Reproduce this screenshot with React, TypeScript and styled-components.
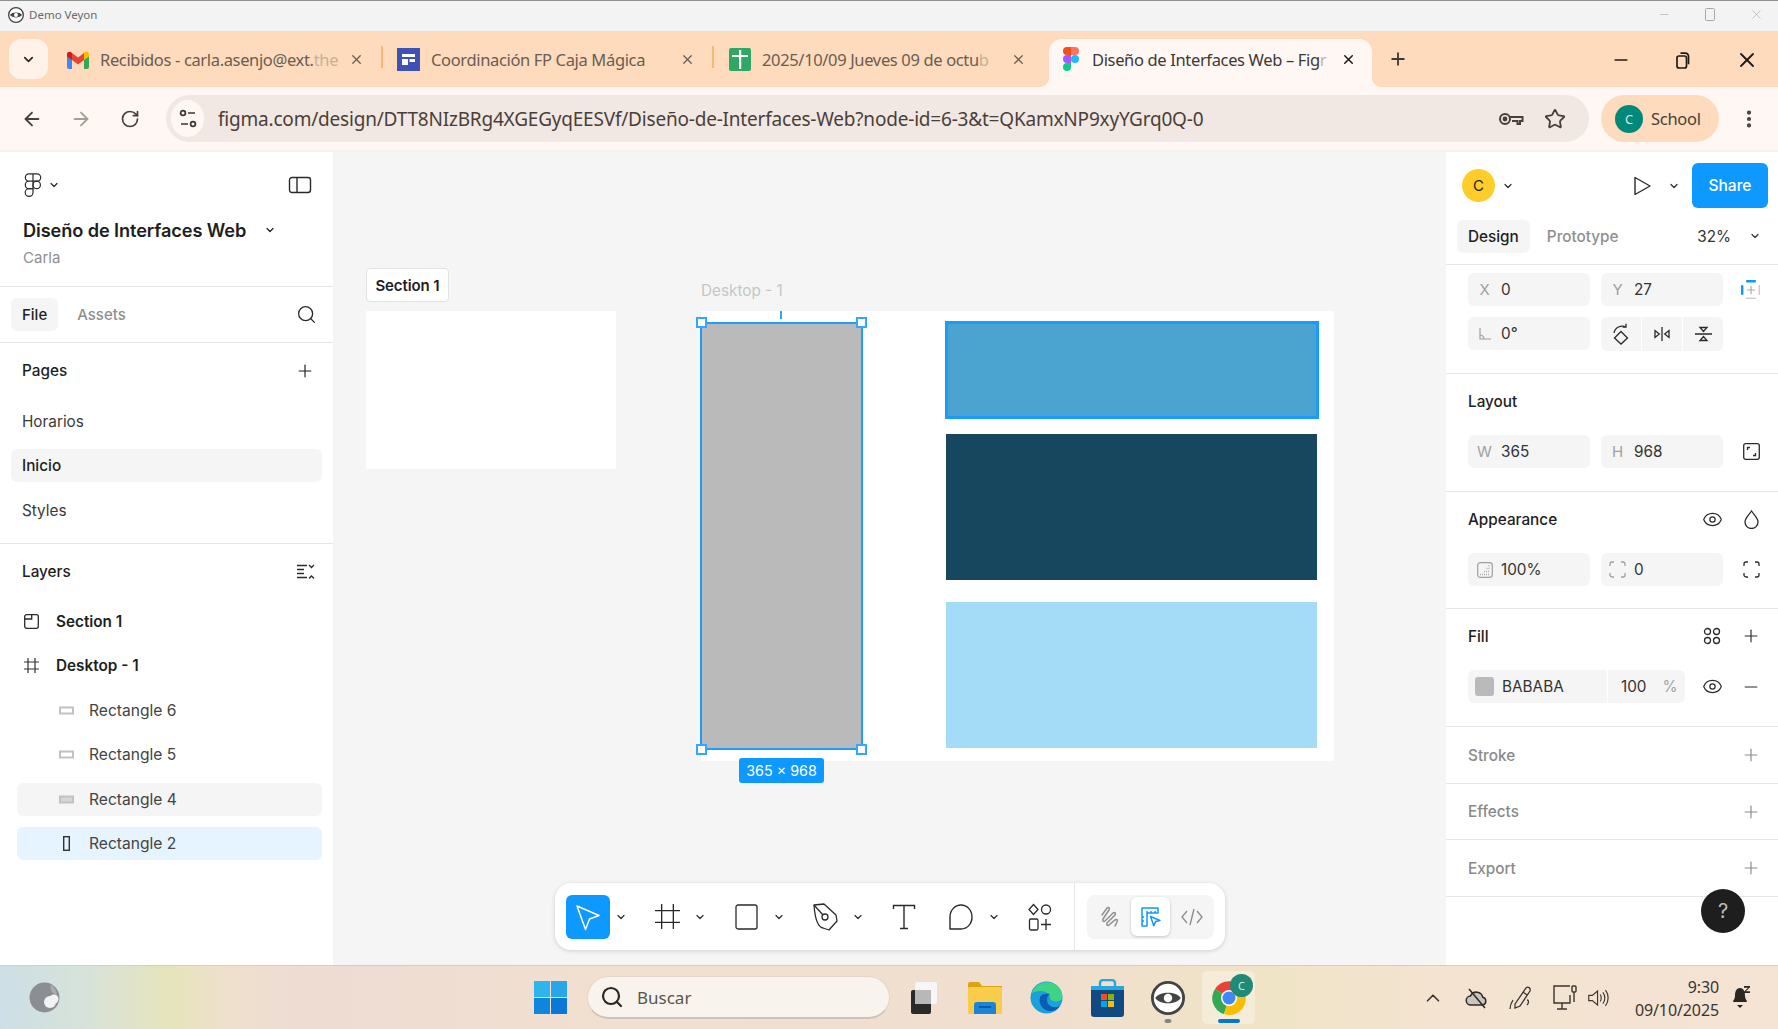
import React from "react";
import styled, { createGlobalStyle } from "styled-components";
import { ArrowLeft, ArrowRight, ChevronDown, ChevronUp, EllipsisVertical, Eye, Minus, Plus, RotateCw, Search, Star, X } from "lucide-react";

const Global = createGlobalStyle`
  html, body { margin: 0; padding: 0; width: 1778px; height: 1029px; overflow: hidden; background: #fff; }
  * { box-sizing: border-box; }
`;
const Page = styled.div`
  width: 1778px; height: 1029px; display: flex; flex-direction: column; overflow: hidden;
  font-family: Inter, "Noto Sans", sans-serif; color: #1e1e1e;
`;

/* ---------- OS title bar ---------- */
const TitleBar = styled.div`
  height: 31px; flex: none; display: flex; align-items: center; padding: 0 14px 3px 8px; gap: 5px;
  background: #f3f3f3; border-top: 1px solid #8d9290;
  font: 11.5px "Noto Sans", sans-serif; color: #6a6a6a;
`;
const WinDim = styled.div`
  margin-left: auto; display: flex; gap: 33px; align-items: center; color: #a8a8a8;
`;

/* ---------- Browser tabs ---------- */
const TabStrip = styled.div`
  height: 56px; flex: none; display: flex; align-items: flex-end; background: #fddbbc; padding-left: 9px;
  font-family: "Noto Sans", sans-serif;
`;
const TabListBtn = styled.div`
  width: 39px; height: 40px; margin-bottom: 8px; margin-right: 4px; border-radius: 12px; background: #fff2e9;
  display: flex; align-items: center; justify-content: center; color: #2a2320; flex: none;
`;
const Tab = styled.div<{ $w: number; $active?: boolean; $pad: number; $pr: number }>`
  width: ${p => p.$w}px; height: 48px; flex: none; display: flex; align-items: center; position: relative;
  padding: 0 ${p => p.$pr}px 7px ${p => p.$pad}px; gap: 11px; font-size: 16.5px; color: ${p => (p.$active ? "#3e3733" : "#6a5d52")};
  ${p => p.$active && `
    background: #fff7f3; border-radius: 13px 13px 0 0; padding-bottom: 8px; gap: 13px; color: #3e3733;
    &::before, &::after { content: ""; position: absolute; bottom: 0; width: 10px; height: 10px; }
    &::before { left: -10px; background: radial-gradient(circle at 0 0, transparent 10px, #fff7f3 10.5px); }
    &::after { right: -10px; background: radial-gradient(circle at 100% 0, transparent 10px, #fff7f3 10.5px); }
  `}
`;
const TabText = styled.span`
  flex: 1; min-width: 0; white-space: nowrap; letter-spacing: -0.35px;
`;
const TabFade = styled.span`
  opacity: 0.35;
`;
const TabSep = styled.div`
  width: 2px; height: 22px; margin-bottom: 19px; background: #f6b777; flex: none;
`;
const NewTab = styled.div`
  width: 24px; margin-left: 14px; margin-bottom: 16px; height: 24px; display: flex; align-items: center; justify-content: center; color: #3e3733; flex: none;
`;
const WinControls = styled.div`
  margin-left: auto; margin-right: 19px; margin-bottom: 15px; display: flex; gap: 45px; align-items: center; color: #1f1a17;
`;

/* ---------- Browser toolbar ---------- */
const BrowserBar = styled.div`
  height: 63px; flex: none; display: flex; align-items: center; background: #fff7f3; padding: 0 0 0 20px;
  font-family: "Noto Sans", sans-serif; color: #4a3f38;
`;
const NavIcon = styled.div<{ $dim?: boolean }>`
  width: 24px; height: 24px; margin-right: 25px; display: flex; align-items: center; justify-content: center; flex: none;
  color: ${p => (p.$dim ? "#a89d95" : "#4a3f38")};
`;
const Omnibox = styled.div`
  width: 1423px; height: 47px; margin-left: -1px; border-radius: 24px; background: #f1e8e3; flex: none;
  display: flex; align-items: center; padding: 0 23px 0 5px; font-size: 19px; letter-spacing: -0.2px;
`;
const SiteBtn = styled.div`
  width: 33px; height: 37px; border-radius: 50%; background: #fff7f3; display: flex; align-items: center; justify-content: center; margin-right: 14px; flex: none;
`;
const UrlText = styled.span`
  flex: 1; white-space: nowrap;
`;
const OmniIcons = styled.div`
  display: flex; gap: 20px; align-items: center; color: #4a3f38;
`;
const ProfilePill = styled.div`
  width: 118px; height: 47px; margin-left: 12px; border-radius: 24px; background: #fddbbc; flex: none;
  display: flex; align-items: center; gap: 8px; padding-left: 14px; font-size: 16.5px; letter-spacing: -0.3px;
`;
const ProfileDot = styled.div`
  width: 28px; height: 28px; border-radius: 50%; background: #00897b; color: #cfeee8; font-size: 13px;
  display: flex; align-items: center; justify-content: center; flex: none;
`;
const MenuBtn = styled.div`
  margin-left: 19px; color: #4a3f38; display: flex;
`;
const ChromeEdge = styled.div`
  height: 2px; flex: none; background: #fbeee5;
`;

/* ---------- Main ---------- */
const Main = styled.div`
  flex: 1; min-height: 0; display: flex; background: #f5f5f5;
`;

const LeftPanel = styled.aside`
  width: 333px; flex: none; background: #fff; display: flex; flex-direction: column;
`;
const LeftHeader = styled.div`
  height: 135px; flex: none; padding: 17px 22px 0 23px; border-bottom: 1px solid #e6e6e6;
`;
const LogoRow = styled.div`
  height: 32px; display: flex; align-items: center; gap: 5px; color: #2a2a2a;
`;
const LogoEnd = styled.div`
  margin-left: auto; margin-right: -1px; display: flex;
`;
const ProjectRow = styled.div`
  margin-top: 16px; height: 26px; display: flex; align-items: center; gap: 0; font-size: 18.2px; font-weight: 600; color: #1e1e1e; letter-spacing: -0.1px;
`;
const ProjectChevron = styled.div`
  margin-left: 18px; display: flex;
`;
const Owner = styled.div`
  margin-top: 4px; height: 22px; line-height: 22px; font-size: 15px; color: #8f8f8f;
`;
const TabsRow = styled.div`
  height: 56px; flex: none; display: flex; align-items: center; padding: 0 16px 0 11px; gap: 8px; border-bottom: 1px solid #e6e6e6;
  font-size: 15px; font-weight: 500;
`;
const PanelTab = styled.div<{ $active?: boolean }>`
  height: 33px; padding: 0 11px; border-radius: 6px; display: flex; align-items: center;
  background: ${p => (p.$active ? "#f5f5f5" : "transparent")}; color: ${p => (p.$active ? "#1e1e1e" : "#8f8f8f")};
`;
const TabEnd = styled.div`
  margin-left: auto; display: flex; color: #2a2a2a;
`;
const PagesBlock = styled.section`
  height: 201px; flex: none; padding: 11px 11px 0; border-bottom: 1px solid #e6e6e6;
`;
const HeadRow = styled.div`
  height: 33px; display: flex; align-items: center; justify-content: space-between; padding: 0 7px 0 11px; font-size: 15.3px; font-weight: 550; color: #1e1e1e;
`;
const RowList = styled.div`
  margin-top: 17.5px; display: grid; grid-auto-rows: 33px; row-gap: 11.5px;
`;
const LayerList = styled(RowList)`
  margin-top: 16.5px;
`;
const PageRow = styled.div<{ $active?: boolean }>`
  display: flex; align-items: center; padding-left: 11px; border-radius: 6px; font-size: 15.3px;
  background: ${p => (p.$active ? "#f5f5f5" : "transparent")}; color: ${p => (p.$active ? "#1e1e1e" : "#3a3a3a")};
  font-weight: ${p => (p.$active ? 500 : 400)};
`;
const LayersBlock = styled.section`
  flex: 1; padding: 11px 11px 0;
`;
const LayerRow = styled.div<{ $indent?: boolean; $bg?: string }>`
  margin-left: 6px; display: flex; align-items: center; border-radius: 6px; background: ${p => p.$bg ?? "transparent"};
  padding-left: ${p => (p.$indent ? 41 : 6)}px; gap: ${p => (p.$indent ? 14 : 16)}px;
  font-size: ${p => (p.$indent ? 15.6 : 15.3)}px; font-weight: ${p => (p.$indent ? 400 : 600)}; color: ${p => (p.$indent ? "#444" : "#1e1e1e")};
`;
const LayerIcon = styled.div`
  width: 17px; display: flex; align-items: center; justify-content: center; flex: none; color: #333;
`;

/* ---------- Canvas ---------- */
const Canvas = styled.main`
  flex: 1; min-width: 0; position: relative; overflow: hidden; background: #f5f5f5;
`;
const Box = styled.div<{ $x: number; $y: number; $w: number; $h: number; $bg?: string }>`
  position: absolute; left: ${p => p.$x - 333}px; top: ${p => p.$y - 152}px; width: ${p => p.$w}px; height: ${p => p.$h}px;
  background: ${p => p.$bg ?? "transparent"};
`;
const SectionTag = styled(Box)`
  background: #fff; border: 1px solid #e2e2e2; border-radius: 4px; font-size: 15px; font-weight: 600;
  display: flex; align-items: center; justify-content: center; color: #1e1e1e; letter-spacing: -0.1px;
`;
const FrameLabel = styled(Box)`
  font-size: 15.3px; color: #c6c6c6; font-weight: 400; line-height: 22px;
`;
const Selected = styled(Box)`
  border: 2px solid #1e9dff;
`;
const Hovered = styled(Box)`
  border: 3px solid #1a9bff;
`;
const Handle = styled(Box)`
  background: #fff; border: 2px solid #35a6ff; width: 11px; height: 11px; margin: -5px 0 0 -5px;
`;
const Tick = styled(Box)`
  border-left: 2px dashed #2ea3ff;
`;
const SizeTag = styled(Box)`
  background: #0d99ff; color: #fff; border-radius: 3px; font-size: 14.3px; font-weight: 400;
  display: flex; align-items: center; justify-content: center;
`;
const FloatBar = styled.div`
  position: absolute; left: ${555 - 333}px; top: ${883 - 152}px; width: 670px; height: 67px; border-radius: 16px; background: #fff;
  box-shadow: 0 1px 4px rgba(0,0,0,.16); display: flex; align-items: center; padding-left: 11px;
`;
const ToolSet = styled.div`
  display: flex; align-items: center; gap: 13px;
`;
const ToolPair = styled.div`
  display: flex; align-items: center;
`;
const Tool = styled.div<{ $active?: boolean }>`
  width: 44px; height: 44px; border-radius: 6px; display: flex; align-items: center; justify-content: center;
  background: ${p => (p.$active ? "#0d99ff" : "transparent")}; color: ${p => (p.$active ? "#fff" : "#2a2a2a")};
`;
const ToolChevron = styled.div`
  width: 22px; display: flex; align-items: center; justify-content: center; color: #2a2a2a;
`;
const BarDivider = styled.div`
  width: 1px; height: 100%; margin-left: 12px; background: #e6e6e6; flex: none;
`;
const ModeGroup = styled.div`
  margin-left: 12px; width: 127px; height: 44px; border-radius: 8px; background: #f5f5f5; display: flex; align-items: center; justify-content: space-between; padding: 0 3px 0 3px;
`;
const ModeBtn = styled.div<{ $active?: boolean }>`
  width: 39px; height: 39px; border-radius: 6px; display: flex; align-items: center; justify-content: center;
  background: ${p => (p.$active ? "#fff" : "transparent")}; box-shadow: ${p => (p.$active ? "0 1px 3px rgba(0,0,0,.2)" : "none")};
  color: ${p => (p.$active ? "#0d99ff" : "#8f8f8f")};
`;

/* ---------- Right panel ---------- */
const RightPanel = styled.aside`
  width: 332px; flex: none; background: #fff; display: flex; flex-direction: column; position: relative;
`;
const RightHead = styled.div`
  height: 113px; flex: none; padding: 11px 10px 0 11px; border-bottom: 1px solid #e6e6e6;
`;
const RightTop = styled.div`
  height: 45px; display: flex; align-items: center; padding-left: 5px;
`;
const Avatar = styled.div`
  width: 33px; height: 33px; border-radius: 50%; background: #ffcd29; font-size: 15px; font-weight: 400; color: #222;
  display: flex; align-items: center; justify-content: center; flex: none;
`;
const SmallChevron = styled.div<{ $ml?: number }>`
  display: flex; margin-left: ${p => p.$ml ?? 0}px; color: #2a2a2a;
`;
const PlayBtn = styled.div`
  margin-left: auto; display: flex; color: #2a2a2a;
`;
const ShareBtn = styled.div`
  width: 76px; height: 45px; margin-left: 12px; border-radius: 6px; background: #0d99ff; color: #fff; font-size: 15.5px; font-weight: 500;
  display: flex; align-items: center; justify-content: center;
`;
const RightTabs = styled.div`
  margin-top: 11px; height: 34px; display: flex; align-items: center; gap: 6px; font-size: 15.3px; font-weight: 500;
`;
const Zoom = styled.div`
  margin-left: auto; display: flex; align-items: center; gap: 18px; font-size: 15.3px; font-weight: 400; color: #333; padding-right: 7px;
`;
const Block = styled.section<{ $pt?: number; $pb?: number }>`
  padding: ${p => p.$pt ?? 14}px 10px ${p => p.$pb ?? 22}px 22px; border-bottom: 1px solid #e6e6e6; flex: none;
`;
const BlockTitle = styled.div<{ $muted?: boolean }>`
  height: 26px; display: flex; align-items: center; font-size: 15.3px; font-weight: ${p => (p.$muted ? 500 : 550)};
  color: ${p => (p.$muted ? "#8a8a8a" : "#1e1e1e")};
`;
const TitleIcons = styled.div`
  margin-left: auto; display: flex; align-items: center; color: #2a2a2a;
`;
const IconCell = styled.div<{ $muted?: boolean; $flush?: boolean }>`
  width: 34px; height: 33px; display: flex; align-items: center; justify-content: center; flex: none; margin-left: ${p => (p.$flush ? 0 : 5)}px;
  color: ${p => (p.$muted ? "#8a8a8a" : "#2a2a2a")};
`;
const FieldGrid = styled.div<{ $mt?: number }>`
  display: grid; grid-template-columns: 122px 122px 34px; column-gap: 11px; row-gap: 11px; margin-top: ${p => p.$mt ?? 0}px;
`;
const Field = styled.div`
  height: 33px; border-radius: 6px; background: #f5f5f5; display: flex; align-items: center; font-size: 15.3px; color: #333;
`;
const FieldLabel = styled.div`
  width: 33px; flex: none; display: flex; align-items: center; justify-content: center; color: #a0a0a0; font-size: 15px;
`;
const Segments = styled.div`
  height: 34px; display: grid; grid-template-columns: 1fr 1fr 1fr; column-gap: 1px;
`;
const Segment = styled.div`
  background: #f5f5f5; display: flex; align-items: center; justify-content: center; color: #2a2a2a;
  &:first-child { border-radius: 6px 0 0 6px; } &:last-child { border-radius: 0 6px 6px 0; }
`;
const FillRow = styled.div`
  margin-top: 21px; display: flex; align-items: center;
`;
const FillField = styled(Field)`
  width: 217px; flex: none; margin-right: 5px;
`;
const Swatch = styled.div`
  width: 19px; height: 19px; margin: 0 8px 0 7px; border-radius: 3px; background: #bababa; flex: none;
`;
const HexText = styled.div`
  width: 106px; height: 100%; display: flex; align-items: center; border-right: 1px solid #fff; flex: none;
`;
const Opacity = styled.div`
  display: flex; align-items: center; padding-left: 13px; gap: 16px;
`;
const Pct = styled.span`
  color: #a0a0a0;
`;
const HelpBtn = styled.div`
  position: absolute; left: 255px; top: 737px; width: 44px; height: 44px; border-radius: 50%; background: #1e1e1e; color: #bbb;
  display: flex; align-items: center; justify-content: center; font-size: 20px;
`;
const EmptyBlock = styled.section<{ $h: number }>`
  height: ${p => p.$h}px; padding: 0 10px 0 22px; display: flex; align-items: center; border-bottom: 1px solid #e6e6e6; flex: none;
`;

/* ---------- Taskbar ---------- */
const Taskbar = styled.footer`
  height: 64px; flex: none; display: flex; align-items: center; position: relative;
  border-top: 1px solid #d8cdc5;
  background: linear-gradient(90deg, #cddfe6 0, #d8e3d8 90px, #e6e4bb 170px, #efe0cd 230px, #eedcd4 300px, #f1dfcf 620px, #f0dfcf 1050px, #f0e4c6 1270px, #f3e3d0 1420px, #f5e3d4 100%);
  font-family: "Noto Sans", sans-serif; color: #3a3430;
`;
const WidgetSlot = styled.div`
  width: 534px; padding-left: 29px; flex: none; display: flex; align-items: center;
`;
const SearchBox = styled.div`
  width: 303px; height: 43px; margin-left: 20px; flex: none; border-radius: 22px; background: #f9f3ed; border: 1px solid #e2d6cc; border-bottom: 2px solid #cfc3b9;
  display: flex; align-items: center; padding-left: 12px; gap: 13px; font-size: 17px; color: #5c544e;
`;
const AppSlot = styled.div<{ $ml: number; $w: number; $active?: boolean }>`
  margin-left: ${p => p.$ml}px; width: ${p => p.$w}px; height: 53px; flex: none; display: flex; align-items: center; justify-content: center; position: relative; border-radius: 5px;
  background: ${p => (p.$active ? "rgba(255,255,255,.32)" : "transparent")};
`;
const RunDot = styled.div<{ $blue?: boolean }>`
  position: absolute; bottom: 1px; left: 50%; transform: translateX(-50%); height: 4px; border-radius: 2px;
  width: ${p => (p.$blue ? 22 : 7)}px; background: ${p => (p.$blue ? "#0078d4" : "#8a8580")};
`;
const ChromeBadge = styled.div`
  position: absolute; top: 3px; right: 2px; width: 23px; height: 23px; border-radius: 50%; background: #1f8a76; color: #cfeee8; font-size: 11px;
  display: flex; align-items: center; justify-content: center;
`;
const Tray = styled.div`
  position: absolute; inset: 0 13px 0 auto; display: flex; align-items: center; color: #3a3430;
`;
const TrayIcon = styled.div<{ $w: number }>`
  width: ${p => p.$w}px; flex: none; display: flex; align-items: center; justify-content: center;
`;
const Clock = styled.div`
  width: 110px; margin-top: 3px; text-align: right; font-size: 16px; line-height: 23px; letter-spacing: -0.1px; color: #3a3430; flex: none;
`;

/* ---------- Drawings ---------- */
const VeyonEye = ({ s = 16 }: { s?: number }) => (
  <svg width={s} height={s} viewBox="0 0 24 24"><circle cx="12" cy="12" r="11" fill="#fff" stroke="#444" strokeWidth="2" /><path d="M3 12c3-5 15-5 18 0-3 5-15 5-18 0z" fill="#444" /><circle cx="12" cy="12" r="3" fill="#fff" /></svg>
);
const Gmail = () => (
  <svg width="22" height="18" viewBox="0 0 22 18"><path d="M0 4v12a2 2 0 0 0 2 2h3V8z" fill="#4285f4" /><path d="M22 4v12a2 2 0 0 1-2 2h-3V8z" fill="#34a853" /><path d="M17 1.5V9l5-3.6V3c0-2.4-3-3.4-5-1.5z" fill="#fbbc04" /><path d="M5 9V2l6 4.6L17 2v7l-6 4.5z" fill="#ea4335" /><path d="M0 3v2.4L5 9V2C3-.2 0 .7 0 3z" fill="#c5221f" /></svg>
);
const DocsIcon = () => (
  <svg width="23" height="23" viewBox="0 0 23 23"><rect width="23" height="23" fill="#3f51b5" /><rect x="5" y="6" width="13" height="3" fill="#fff" /><rect x="5" y="11" width="6" height="6" fill="#fff" /><rect x="12.5" y="11" width="5.5" height="3" fill="#fff" /></svg>
);
const SheetsIcon = () => (
  <svg width="22" height="23" viewBox="0 0 22 23"><rect width="22" height="23" rx="2" fill="#2fa866" /><rect x="3" y="7" width="16" height="2" fill="#fff" /><rect x="10" y="2" width="2.2" height="19" fill="#fff" /></svg>
);
const FigmaColor = () => (
  <svg width="16" height="24" viewBox="0 0 16 24"><path d="M4 0h4v8H4a4 4 0 0 1 0-8z" fill="#f24e1e" /><path d="M8 0h4a4 4 0 0 1 0 8H8z" fill="#ff7262" /><path d="M4 8h4v8H4a4 4 0 0 1 0-8z" fill="#a259ff" /><circle cx="12" cy="12" r="4" fill="#1abcfe" /><path d="M4 16h4v4a4 4 0 1 1-4-4z" fill="#0acf83" /></svg>
);
const FigmaLine = () => (
  <svg width="20" height="24" viewBox="0 0 16 24" fill="none" stroke="currentColor" strokeWidth="1.2"><path d="M4 .8h4v7.4H4a3.7 3.7 0 0 1 0-7.4zM8 .8h4a3.7 3.7 0 0 1 0 7.4H8zM4 8.2h4v7.4H4a3.7 3.7 0 0 1 0-7.4z" /><circle cx="11.7" cy="11.9" r="3.7" /><path d="M4 15.6h4v3.9a3.9 3.9 0 1 1-4-3.9z" /></svg>
);
const Tiny = ({ s = 12 }: { s?: number }) => <ChevronDown size={s} strokeWidth={2.4} />;
const SidebarIcon = () => (
  <svg width="24" height="18" viewBox="0 0 24 18" fill="none" stroke="#2a2a2a" strokeWidth="1.4"><rect x="1.5" y="1.5" width="21" height="15" rx="2.5" /><path d="M9 1.5v15" /></svg>
);
const CollapseIcon = () => (
  <svg width="18" height="16" viewBox="0 0 18 16" fill="none" stroke="#2a2a2a" strokeWidth="1.3"><path d="M0 1.5h10M0 5.5h7M0 9.5h7M0 13.5h10" /><path d="M12 1l2.5 2.5L17 1M12 14.5L14.5 12l2.5 2.5" /></svg>
);
const SectionIcon = () => (
  <svg width="15" height="15" viewBox="0 0 15 15" fill="none" stroke="#2a2a2a" strokeWidth="1.3"><rect x=".7" y=".7" width="13.6" height="13.6" rx="2" /><path d="M.7 5h7V.7" /></svg>
);
const FrameIcon = ({ s = 15, w = 1.2 }: { s?: number; w?: number }) => (
  <svg width={s} height={s} viewBox="0 0 15 15" fill="none" stroke="currentColor" strokeWidth={w}><path d="M4 0v15M11 0v15M0 4h15M0 11h15" /></svg>
);
const RectH = () => (
  <svg width="15" height="9" viewBox="0 0 15 9"><rect x="1" y="1.5" width="13" height="6" fill="#fff" stroke="#c2c2c2" strokeWidth="2" /></svg>
);
const RectHFill = () => (
  <svg width="15" height="9" viewBox="0 0 15 9"><rect x="1" y="1.5" width="13" height="6" fill="#d6d6d6" stroke="#c2c2c2" strokeWidth="2" /></svg>
);
const RectV = () => (
  <svg width="9" height="15" viewBox="0 0 9 15"><rect x="1.7" y=".7" width="5.6" height="13.6" fill="none" stroke="#333" strokeWidth="1.4" /></svg>
);
const PlayLine = () => (
  <svg width="20" height="22" viewBox="0 0 20 22" fill="none" stroke="#2a2a2a" strokeWidth="1.4" strokeLinejoin="round"><path d="M3 2.5 18 11 3 19.5z" /></svg>
);
const AddLayout = () => (
  <svg width="22" height="22" viewBox="0 0 22 22"><rect x="6" y="1" width="10" height="2.4" rx="1" fill="#0d99ff" /><rect x="1" y="6" width="2.4" height="10" rx="1" fill="#0d99ff" /><rect x="18.6" y="6" width="1.4" height="10" fill="#ccc" /><rect x="6" y="18.6" width="10" height="1.4" fill="#ccc" /><path d="M11 7v8M7 11h8" stroke="#aaa" strokeWidth="1.2" /></svg>
);
const AngleIcon = () => (
  <svg width="14" height="14" viewBox="0 0 14 14" fill="none" stroke="#a0a0a0" strokeWidth="1.2"><path d="M2 1v11h11M2 8a4 4 0 0 1 4 4" /></svg>
);
const RotateIcon = () => (
  <svg width="18" height="22" viewBox="0 0 18 22" fill="none" stroke="#2a2a2a" strokeWidth="1.3"><path d="M9 8.5l6.5 6.5L9 21l-6.5-6L9 8.5z" /><path d="M2 10C3 4 9 2 14 4M14 .8V4.2h-3.4" /></svg>
);
const FlipH = () => (
  <svg width="16" height="14" viewBox="0 0 16 14" fill="none" stroke="#2a2a2a" strokeWidth="1.3"><path d="M8 0v14M5.3 7 1 3.5v7zM10.7 7 15 3.5v7z" /></svg>
);
const FlipV = () => (
  <svg width="17" height="16" viewBox="0 0 17 16" fill="none" stroke="#2a2a2a" strokeWidth="1.3"><path d="M0 8h17M8.5 5.5 5 1.5h7zM8.5 10.5 5 14.5h7z" /></svg>
);
const ResizeIcon = () => (
  <svg width="17" height="17" viewBox="0 0 17 17" fill="none" stroke="#2a2a2a" strokeWidth="1.3"><rect x=".7" y=".7" width="15.6" height="15.6" rx="2" /><path d="M4.5 7V4.5H7M12.5 10v2.5H10" /></svg>
);
const Drop = () => (
  <svg width="15" height="19" viewBox="0 0 15 19" fill="none" stroke="#2a2a2a" strokeWidth="1.3"><path d="M7.5 1C5 5 1 8 1 12a6.5 6.5 0 0 0 13 0C14 8 10 5 7.5 1z" /></svg>
);
const OpacityIcon = () => (
  <svg width="16" height="16" viewBox="0 0 16 16" fill="none"><rect x=".7" y=".7" width="14.6" height="14.6" rx="2.5" stroke="#a0a0a0" strokeWidth="1.2" /><path d="M3 12.5h10M7 9.5h6M9.5 6.5h3.5M11.5 3.7h1.5" stroke="#aaa" strokeWidth="1.6" strokeDasharray="1 1" /></svg>
);
const CornersIcon = ({ c = "#2a2a2a" }: { c?: string }) => (
  <svg width="17" height="17" viewBox="0 0 17 17" fill="none" stroke={c} strokeWidth="1.3"><path d="M1 5V3a2 2 0 0 1 2-2h2M12 1h2a2 2 0 0 1 2 2v2M16 12v2a2 2 0 0 1-2 2h-2M5 16H3a2 2 0 0 1-2-2v-2" /></svg>
);
const StylesIcon = () => (
  <svg width="18" height="18" viewBox="0 0 18 18" fill="none" stroke="#2a2a2a" strokeWidth="1.3"><circle cx="4.5" cy="4.5" r="3" /><circle cx="13.5" cy="4.5" r="3" /><circle cx="4.5" cy="13.5" r="3" /><circle cx="13.5" cy="13.5" r="3" /></svg>
);
const CursorIcon = () => (
  <svg width="28" height="30" viewBox="0 0 28 30" fill="none" stroke="#fff" strokeWidth="1.5" strokeLinejoin="round"><path d="M3 4l22 9.5-9.5 3.5-4 10.5z" /></svg>
);
const RectTool = () => (
  <svg width="23" height="26" viewBox="0 0 23 26" fill="none" stroke="currentColor" strokeWidth="1.3"><rect x="1" y="1" width="21" height="24" rx="2" /></svg>
);
const PenTool = () => (
  <svg width="27" height="30" viewBox="0 0 27 30" fill="none" stroke="currentColor" strokeWidth="1.3" strokeLinejoin="round"><path d="M2 3l10-1 12 11 1 6-8 9-6-2C6 25 3 17 2 3z" /><path d="M2 3l9 10" /><circle cx="13" cy="15" r="3" /></svg>
);
const TextTool = () => (
  <svg width="24" height="26" viewBox="0 0 24 26" fill="none" stroke="currentColor" strokeWidth="1.4"><path d="M1.5 5V1.5h21V5M12 1.5V24.5M8 24.5h8" /></svg>
);
const BubbleTool = () => (
  <svg width="24" height="26" viewBox="0 0 24 26" fill="none" stroke="currentColor" strokeWidth="1.4"><path d="M1 25V13C1 6 6 1 12 1s11 5 11 12-5 12-11 12z" strokeLinejoin="round" /></svg>
);
const ActionsTool = () => (
  <svg width="24" height="28" viewBox="0 0 24 28" fill="none" stroke="currentColor" strokeWidth="1.3"><path d="M5.5 1.5 10 6.5l-4.5 5-4.5-5z" /><circle cx="18" cy="6.5" r="4.5" /><rect x="1.5" y="16" width="8.5" height="11" rx="1.5" /><path d="M18 16v11M13 21.5h10" /></svg>
);
const DrawMode = () => (
  <svg width="20" height="22" viewBox="0 0 20 22" fill="none" stroke="currentColor" strokeWidth="1.5"><path d="M2 9l5-7c2-1 3 0 2 2L3 13c-1 2 1 3 2 2l8-8c2-1 3 0 2 2l-8 8c-1 2 1 3 2 2l6-5c2-1 3 0 2 2l-2 4" strokeLinecap="round" /></svg>
);
const DevMode = () => (
  <svg width="20" height="20" viewBox="0 0 20 20" fill="none" stroke="currentColor" strokeWidth="1.5" strokeLinejoin="round"><path d="M1 1h16v5H6v13H1zM6 6V4M10 6V4M14 6V4M1 10h2M1 14h2" /><path d="M9.5 9.5l9.5 4-4.4 1.1-1.8 4.2z" /></svg>
);
const CodeMode = () => (
  <svg width="22" height="18" viewBox="0 0 22 18" fill="none" stroke="currentColor" strokeWidth="1.4"><path d="M6 3 1 9l5 6M16 3l5 6-5 6M13 1 9 17" /></svg>
);
const SiteIcon = () => (
  <svg width="18" height="22" viewBox="0 0 18 22" fill="none" stroke="#3f3630" strokeWidth="1.7"><circle cx="4" cy="5" r="2.4" /><path d="M9 5h7M2 16h7" /><circle cx="14" cy="16" r="2.4" /></svg>
);
const KeyIcon = () => (
  <svg width="26" height="18" viewBox="0 0 26 18" fill="none" stroke="#4a3f38" strokeWidth="2"><circle cx="7" cy="9" r="5" /><circle cx="7" cy="9" r="1.4" fill="#4a3f38" /><path d="M12 7h12.5v4H22v3h-2.5v-3H14" /></svg>
);
const Restore = () => (
  <svg width="14" height="17" viewBox="0 0 14 17" fill="none" stroke="#1f1a17" strokeWidth="1.7"><rect x="1" y="4" width="9.5" height="12" rx="2" /><path d="M4.5 1.2h5a3 3 0 0 1 3 3v8" /></svg>
);
const Moon = () => (
  <svg width="31" height="31" viewBox="0 0 31 31"><circle cx="15.5" cy="15.5" r="15" fill="#8b8e92" /><path d="M22 2.5a15 15 0 0 1 6 10c-4 0-8-5-6-10z" fill="#a9adb0" /><circle cx="21" cy="20" r="6" fill="#f2f3f3" /><circle cx="25" cy="17" r="4.5" fill="#f2f3f3" /></svg>
);
const WinLogo = () => (
  <svg width="33" height="33" viewBox="0 0 33 33"><rect width="16" height="16" fill="#2fb4f0" /><rect x="17" width="16" height="16" fill="#29a5ec" /><rect y="17" width="16" height="16" fill="#0f86dc" /><rect x="17" y="17" width="16" height="16" fill="#0a78d6" /></svg>
);
const TaskView = () => (
  <svg width="34" height="34" viewBox="0 0 34 34"><rect x="10" y="1" width="22" height="22" rx="2" fill="#f6f6f6" /><rect x="6" y="9" width="20" height="24" rx="2" fill="#2a2a2a" /><rect x="10" y="9" width="16" height="14" fill="#b8b8b8" /></svg>
);
const Folder = () => (
  <svg width="36" height="34" viewBox="0 0 36 34"><path d="M1 3a2 2 0 0 1 2-2h9l3 4h19a1 1 0 0 1 1 1v3H1z" fill="#d9a514" /><rect x="1" y="6" width="34" height="27" rx="1.5" fill="#f9cc4a" /><path d="M7 33V24a3 3 0 0 1 3-3h16a3 3 0 0 1 3 3v9z" fill="#1984d8" /><rect x="12" y="25" width="12" height="2" fill="#0b5aa5" /></svg>
);
const Edge = () => (
  <svg width="33" height="33" viewBox="0 0 33 33"><circle cx="16.5" cy="16.5" r="16" fill="#1aa0dc" /><path d="M2 12C5 2 17-2 26 4c6 4 8 12 5 15-4 3-11 1-11-2 1-5-8-10-18-5z" fill="#3dd486" /><path d="M10 16c-2 8 4 15 12 14 3-.5 6-2 8-5-6 3-13 0-13-6 0-3 1-5 3-6-4-1-9 0-10 3z" fill="#0b5cb3" /></svg>
);
const Store = () => (
  <svg width="33" height="38" viewBox="0 0 33 38"><path d="M9 9V4a3 3 0 0 1 3-3h9a3 3 0 0 1 3 3v5" fill="none" stroke="#27a6df" strokeWidth="2.4" /><rect y="7" width="33" height="31" rx="3" fill="#0f4a83" /><rect y="7" width="33" height="4" fill="#27a6df" /><rect x="10" y="15" width="6" height="6" fill="#f25022" /><rect x="17" y="15" width="6" height="6" fill="#7fba00" /><rect x="10" y="22" width="6" height="6" fill="#00a4ef" /><rect x="17" y="22" width="6" height="6" fill="#ffb900" /></svg>
);
const Chrome = () => (
  <svg width="36" height="36" viewBox="0 0 36 36"><path d="M18 18 4 9a16.5 16.5 0 0 1 28 0z" fill="#e94235" /><path d="M18 18 4 9a16.5 16.5 0 0 0 9 25z" fill="#34a853" /><path d="M18 18 32 9a16.5 16.5 0 0 1-19 25z" fill="#fbbc04" /><circle cx="18" cy="18" r="8" fill="#fff" /><circle cx="18" cy="18" r="6.5" fill="#4285f4" /></svg>
);
const CloudOff = () => (
  <svg width="24" height="24" viewBox="0 0 24 24" fill="none" stroke="#2f2a26" strokeWidth="1.5"><path d="M6 19a4.5 4.5 0 0 1-.5-9 6.5 6.5 0 0 1 12.3 1.3A4 4 0 0 1 18 19z" fill="#c9c4be" /><path d="M4 3l16 19" /></svg>
);
const PenTray = () => (
  <svg width="26" height="26" viewBox="0 0 26 26" fill="none" stroke="#3a3430" strokeWidth="1.3"><path d="M7 19 18 3c2-2 5 0 4 3L12 21l-5 2zM15 7l4 3" /><path d="M2 24c0-3 1-6 3-9M19 15c2 0 2 3 0 5" /></svg>
);
const MonitorTray = () => (
  <svg width="26" height="28" viewBox="0 0 26 28" fill="none" stroke="#3a3430" strokeWidth="1.4"><path d="M18 2H2v17h16v-8M10 19v6M5 25h10" /><rect x="20" y="2" width="4" height="6" rx="1" /><path d="M22 8v10" /></svg>
);
const Speaker = () => (
  <svg width="25" height="24" viewBox="0 0 25 24" fill="none" stroke="#3a3430" strokeWidth="1.3"><path d="M2 9v6h4l6 5V4L6 9z" /><path d="M15 8c1.5 2 1.5 6 0 8M18 5.5c3 3.5 3 9.5 0 13M21 3c4 5 4 13 0 18" /></svg>
);
const BellZ = () => (
  <svg width="20" height="26" viewBox="0 0 20 26" fill="#2a2622"><path d="M8 3C4 3 3 7 3 11c0 3-2 4-2 6h14c0-2-2-3-2-6 0-4-1-8-5-8z" /><path d="M5 20h6l-3 3z" /><path d="M12 1h6v1.2l-4 4h4V8h-6V6.8l4-4h-4z" /></svg>
);

const Handles = () => (
  <>
    <Handle $x={701} $y={322} $w={11} $h={11} />
    <Handle $x={861} $y={322} $w={11} $h={11} />
    <Handle $x={701} $y={749} $w={11} $h={11} />
    <Handle $x={861} $y={749} $w={11} $h={11} />
  </>
);

export default function App() {
  return (
    <Page>
      <Global />
      <TitleBar>
        <VeyonEye />
        <span>Demo Veyon</span>
        <WinDim>
          <Minus size={13} strokeWidth={1.2} />
          <svg width="12" height="13" viewBox="0 0 12 13" fill="none" stroke="currentColor"><rect x="1.5" y=".5" width="9" height="12" rx="1" /></svg>
          <X size={15} strokeWidth={1} />
        </WinDim>
      </TitleBar>

      <TabStrip>
        <TabListBtn><ChevronDown size={15} strokeWidth={2.6} /></TabListBtn>
        <Tab $w={329} $pad={15} $pr={17}><Gmail /><TabText>Recibidos - carla.asenjo@ext.<TabFade>the</TabFade></TabText><X size={15} strokeWidth={2} /></Tab>
        <TabSep />
        <Tab $w={329} $pad={14} $pr={17}><DocsIcon /><TabText>Coordinación FP Caja Mágica</TabText><X size={15} strokeWidth={2} /></Tab>
        <TabSep />
        <Tab $w={335} $pad={15} $pr={23}><SheetsIcon /><TabText>2025/10/09 Jueves 09 de octu<TabFade>b</TabFade></TabText><X size={15} strokeWidth={2} /></Tab>
        <Tab $w={323} $pad={14} $pr={16} $active><FigmaColor /><TabText>Diseño de Interfaces Web – Fig<TabFade>r</TabFade></TabText><X size={15} strokeWidth={2.4} color="#1f1a17" /></Tab>
        <NewTab><Plus size={20} strokeWidth={2.2} /></NewTab>
        <WinControls>
          <Minus size={20} strokeWidth={2} />
          <Restore />
          <X size={24} strokeWidth={1.8} />
        </WinControls>
      </TabStrip>

      <BrowserBar>
        <NavIcon><ArrowLeft size={22} strokeWidth={2} /></NavIcon>
        <NavIcon $dim><ArrowRight size={22} strokeWidth={2} /></NavIcon>
        <NavIcon><RotateCw size={20} strokeWidth={2} /></NavIcon>
        <Omnibox>
          <SiteBtn><SiteIcon /></SiteBtn>
          <UrlText>figma.com/design/DTT8NIzBRg4XGEGyqEESVf/Diseño-de-Interfaces-Web?node-id=6-3&amp;t=QKamxNP9xyYGrq0Q-0</UrlText>
          <OmniIcons><KeyIcon /><Star size={22} strokeWidth={2} /></OmniIcons>
        </Omnibox>
        <ProfilePill><ProfileDot>C</ProfileDot>School</ProfilePill>
        <MenuBtn><EllipsisVertical size={22} strokeWidth={2.6} /></MenuBtn>
      </BrowserBar>
      <ChromeEdge />

      <Main>
        <LeftPanel>
          <LeftHeader>
            <LogoRow>
              <FigmaLine /><Tiny />
              <LogoEnd><SidebarIcon /></LogoEnd>
            </LogoRow>
            <ProjectRow>Diseño de Interfaces Web<ProjectChevron><Tiny /></ProjectChevron></ProjectRow>
            <Owner>Carla</Owner>
          </LeftHeader>
          <TabsRow>
            <PanelTab $active>File</PanelTab>
            <PanelTab>Assets</PanelTab>
            <TabEnd><Search size={21} strokeWidth={1.5} /></TabEnd>
          </TabsRow>
          <PagesBlock>
            <HeadRow>Pages<Plus size={20} strokeWidth={1.4} /></HeadRow>
            <RowList>
              <PageRow>Horarios</PageRow>
              <PageRow $active>Inicio</PageRow>
              <PageRow>Styles</PageRow>
            </RowList>
          </PagesBlock>
          <LayersBlock>
            <HeadRow>Layers<CollapseIcon /></HeadRow>
            <LayerList>
              <LayerRow><LayerIcon><SectionIcon /></LayerIcon>Section 1</LayerRow>
              <LayerRow><LayerIcon><FrameIcon /></LayerIcon>Desktop - 1</LayerRow>
              <LayerRow $indent><LayerIcon><RectH /></LayerIcon>Rectangle 6</LayerRow>
              <LayerRow $indent><LayerIcon><RectH /></LayerIcon>Rectangle 5</LayerRow>
              <LayerRow $indent $bg="#f5f5f5"><LayerIcon><RectHFill /></LayerIcon>Rectangle 4</LayerRow>
              <LayerRow $indent $bg="#e5f4ff"><LayerIcon><RectV /></LayerIcon>Rectangle 2</LayerRow>
            </LayerList>
          </LayersBlock>
        </LeftPanel>

        <Canvas>
          <SectionTag $x={366} $y={268} $w={83} $h={34}>Section 1</SectionTag>
          <Box $x={366} $y={311} $w={250} $h={158} $bg="#fff" />
          <FrameLabel $x={701} $y={280} $w={120} $h={22}>Desktop - 1</FrameLabel>
          <Box $x={701} $y={311} $w={633} $h={450} $bg="#fff" />
          <Tick $x={780} $y={311} $w={2} $h={8} />
          <Selected $x={700} $y={322} $w={163} $h={428} $bg="#bababa" />
          <Hovered $x={945} $y={321} $w={374} $h={98} $bg="#4ba3cf" />
          <Box $x={946} $y={434} $w={371} $h={146} $bg="#16475e" />
          <Box $x={946} $y={602} $w={371} $h={146} $bg="#a4dcf8" />
          <Handles />
          <SizeTag $x={739} $y={758} $w={85} $h={25}>365 × 968</SizeTag>

          <FloatBar>
            <ToolSet>
              <ToolPair><Tool $active><CursorIcon /></Tool><ToolChevron><Tiny /></ToolChevron></ToolPair>
              <ToolPair><Tool><FrameIcon s={25} w={0.8} /></Tool><ToolChevron><Tiny /></ToolChevron></ToolPair>
              <ToolPair><Tool><RectTool /></Tool><ToolChevron><Tiny /></ToolChevron></ToolPair>
              <ToolPair><Tool><PenTool /></Tool><ToolChevron><Tiny /></ToolChevron></ToolPair>
              <Tool><TextTool /></Tool>
              <ToolPair><Tool><BubbleTool /></Tool><ToolChevron><Tiny /></ToolChevron></ToolPair>
              <Tool><ActionsTool /></Tool>
            </ToolSet>
            <BarDivider />
            <ModeGroup>
              <ModeBtn><DrawMode /></ModeBtn>
              <ModeBtn $active><DevMode /></ModeBtn>
              <ModeBtn><CodeMode /></ModeBtn>
            </ModeGroup>
          </FloatBar>
        </Canvas>

        <RightPanel>
          <RightHead>
            <RightTop>
              <Avatar>C</Avatar>
              <SmallChevron $ml={7}><Tiny /></SmallChevron>
              <PlayBtn><PlayLine /></PlayBtn>
              <SmallChevron $ml={16}><Tiny /></SmallChevron>
              <ShareBtn>Share</ShareBtn>
            </RightTop>
            <RightTabs>
              <PanelTab $active>Design</PanelTab>
              <PanelTab>Prototype</PanelTab>
              <Zoom>32%<Tiny /></Zoom>
            </RightTabs>
          </RightHead>

          <Block $pt={8}>
            <FieldGrid>
              <Field><FieldLabel>X</FieldLabel>0</Field>
              <Field><FieldLabel>Y</FieldLabel>27</Field>
              <IconCell $flush><AddLayout /></IconCell>
              <Field><FieldLabel><AngleIcon /></FieldLabel>0°</Field>
              <Segments>
                <Segment><RotateIcon /></Segment>
                <Segment><FlipH /></Segment>
                <Segment><FlipV /></Segment>
              </Segments>
            </FieldGrid>
          </Block>

          <Block $pb={23}>
            <BlockTitle>Layout</BlockTitle>
            <FieldGrid $mt={21}>
              <Field><FieldLabel>W</FieldLabel>365</Field>
              <Field><FieldLabel>H</FieldLabel>968</Field>
              <IconCell $flush><ResizeIcon /></IconCell>
            </FieldGrid>
          </Block>

          <Block>
            <BlockTitle>
              Appearance
              <TitleIcons>
                <IconCell><Eye size={21} strokeWidth={1.4} /></IconCell>
                <IconCell><Drop /></IconCell>
              </TitleIcons>
            </BlockTitle>
            <FieldGrid $mt={21}>
              <Field><FieldLabel><OpacityIcon /></FieldLabel>100%</Field>
              <Field><FieldLabel><CornersIcon c="#a0a0a0" /></FieldLabel>0</Field>
              <IconCell $flush><CornersIcon /></IconCell>
            </FieldGrid>
          </Block>

          <Block $pb={23}>
            <BlockTitle>
              Fill
              <TitleIcons>
                <IconCell><StylesIcon /></IconCell>
                <IconCell><Plus size={20} strokeWidth={1.4} /></IconCell>
              </TitleIcons>
            </BlockTitle>
            <FillRow>
              <FillField>
                <Swatch />
                <HexText>BABABA</HexText>
                <Opacity>100<Pct>%</Pct></Opacity>
              </FillField>
              <IconCell><Eye size={21} strokeWidth={1.4} /></IconCell>
              <IconCell><Minus size={20} strokeWidth={1.4} /></IconCell>
            </FillRow>
          </Block>

          <EmptyBlock $h={57}>
            <BlockTitle $muted>Stroke</BlockTitle>
            <TitleIcons><IconCell $muted><Plus size={20} strokeWidth={1.4} /></IconCell></TitleIcons>
          </EmptyBlock>
          <EmptyBlock $h={56}>
            <BlockTitle $muted>Effects</BlockTitle>
            <TitleIcons><IconCell $muted><Plus size={20} strokeWidth={1.4} /></IconCell></TitleIcons>
          </EmptyBlock>
          <EmptyBlock $h={57}>
            <BlockTitle $muted>Export</BlockTitle>
            <TitleIcons><IconCell $muted><Plus size={20} strokeWidth={1.4} /></IconCell></TitleIcons>
          </EmptyBlock>
          <HelpBtn>?</HelpBtn>
        </RightPanel>
      </Main>

      <Taskbar>
        <WidgetSlot><Moon /></WidgetSlot>
        <WinLogo />
        <SearchBox><Search size={24} strokeWidth={2.2} color="#2a2622" />Buscar</SearchBox>
        <AppSlot $ml={12} $w={40}><TaskView /></AppSlot>
        <AppSlot $ml={25} $w={36}><Folder /></AppSlot>
        <AppSlot $ml={25} $w={36}><Edge /></AppSlot>
        <AppSlot $ml={25} $w={36}><Store /></AppSlot>
        <AppSlot $ml={25} $w={36}><VeyonEye s={34} /><RunDot /></AppSlot>
        <AppSlot $ml={16} $w={53} $active><Chrome /><ChromeBadge>C</ChromeBadge><RunDot $blue /></AppSlot>
        <Tray>
          <TrayIcon $w={44}><ChevronUp size={22} strokeWidth={1.8} /></TrayIcon>
          <TrayIcon $w={44}><CloudOff /></TrayIcon>
          <TrayIcon $w={44}><PenTray /></TrayIcon>
          <TrayIcon $w={44}><MonitorTray /></TrayIcon>
          <TrayIcon $w={22}><Speaker /></TrayIcon>
          <Clock>9:30<br />09/10/2025</Clock>
          <TrayIcon $w={46}><BellZ /></TrayIcon>
        </Tray>
      </Taskbar>
    </Page>
  );
}
